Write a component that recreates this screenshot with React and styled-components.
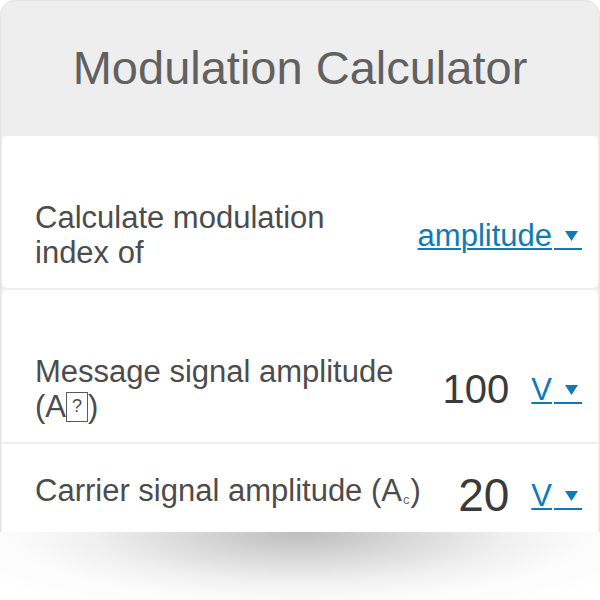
import React from 'react'
import styled, { createGlobalStyle } from 'styled-components'

const GlobalStyle = createGlobalStyle`
  * { box-sizing: border-box; }
  body {
    margin: 0;
    background: #fff;
    font-family: "Liberation Sans", Arial, sans-serif;
  }
`;

function Caret() {
  return (
    <CaretBox>
      <svg width="13" height="10" viewBox="0 0 13 10">
        <polygon points="0,0 13,0 6.5,10" fill="currentColor" />
      </svg>
    </CaretBox>
  )
}

function Dropdown({ label }) {
  return (
    <Select>
      <SelectText>{label}</SelectText>
      <Caret />
    </Select>
  )
}

function App() {
  return (
    <>
      <GlobalStyle />
      <Calculator>
        <Header>
          <Title>Modulation Calculator</Title>
        </Header>

        <Panel>
          <Row $top={64} $bottom={18}>
            <Label>Calculate modulation index of</Label>
            <Dropdown label="amplitude" />
          </Row>
        </Panel>

        <Panel>
          <Row $top={64} $bottom={18}>
            <Label>
              Message signal amplitude (A<Missing>?</Missing>)
            </Label>
            <Field>
              <Value $size={40}>100</Value>
              <Dropdown label="V" />
            </Field>
          </Row>
          <Divider />
          <Row $top={29} $bottom={23}>
            <Label>
              Carrier signal amplitude (A<Sub>c</Sub>)
            </Label>
            <Field>
              <Value $size={46}>20</Value>
              <Dropdown label="V" />
            </Field>
          </Row>
        </Panel>
      </Calculator>
      <Shade />
    </>
  )
}

export default App;


// --------------------------------
// STYLES
// --------------------------------

// the widget is cut off at the bottom edge of the view
const Calculator = styled.div`
  width: 600px;
  height: 532px;
  overflow: hidden;
  background: #eeeeee;
  border: 1px solid #e4e4e4;
  border-bottom: none;
  border-radius: 15px 15px 0 0;
  padding: 0 1px;
  display: flex;
  flex-direction: column;
  gap: 2px;
`;

// soft drop shadow under the cut-off widget
const Shade = styled.div`
  width: 600px;
  height: 68px;
  background: radial-gradient(
    380px 90px at 50% 0,
    rgba(0, 0, 0, 0.26) 0%,
    rgba(0, 0, 0, 0.15) 30%,
    rgba(0, 0, 0, 0.06) 55%,
    rgba(0, 0, 0, 0.015) 75%,
    rgba(0, 0, 0, 0) 100%
  );
`;

const Header = styled.div`
  flex: none;
  height: 133px;
  display: flex;
  align-items: center;
  justify-content: center;
`;

const Title = styled.h1`
  margin: 0;
  font-size: 47px;
  font-weight: 400;
  color: #616161;
`;

const Panel = styled.div`
  flex: none;
  background: #fff;
  border-radius: 5px;
`;

const Row = styled.div`
  display: flex;
  align-items: center;
  justify-content: space-between;
  gap: 16px;
  padding: ${p => p.$top}px 16px ${p => p.$bottom}px 33px;
  line-height: 35px;
`;

const Divider = styled.div`
  height: 2px;
  background: #eeeeee;
`;

const Label = styled.div`
  flex: 1;
  font-size: 31px;
  color: #4c4c4c;
`;

// glyph box the browser shows for a character the font lacks
const Missing = styled.span`
  display: inline-block;
  width: 22px;
  height: 30px;
  border: 1.5px solid #5a5a5a;
  font-size: 18px;
  line-height: 26px;
  text-align: center;
  vertical-align: 5px;
`;

const Sub = styled.span`
  font-size: 13px;
  vertical-align: -3px;
  color: #6a6a6a;
  margin: 0 1px;
`;

const Field = styled.div`
  display: flex;
  align-items: center;
  gap: 22px;
`;

const Value = styled.span`
  font-size: ${p => p.$size}px;
  color: #3a3a3a;
`;

const Select = styled.span`
  font-size: 31px;
  color: #0d7bb6;
  white-space: nowrap;
  cursor: pointer;
`;

const SelectText = styled.span`
  text-decoration: underline;
  text-decoration-thickness: 2px;
  text-underline-offset: 2px;
`;

const CaretBox = styled.span`
  display: inline-block;
  vertical-align: -4px;
  width: 28px;
  height: 22px;
  margin-left: 2px;
  border-bottom: 2px solid currentColor;

  svg {
    display: block;
    margin: 3px 4px 0 auto;
  }
`;
